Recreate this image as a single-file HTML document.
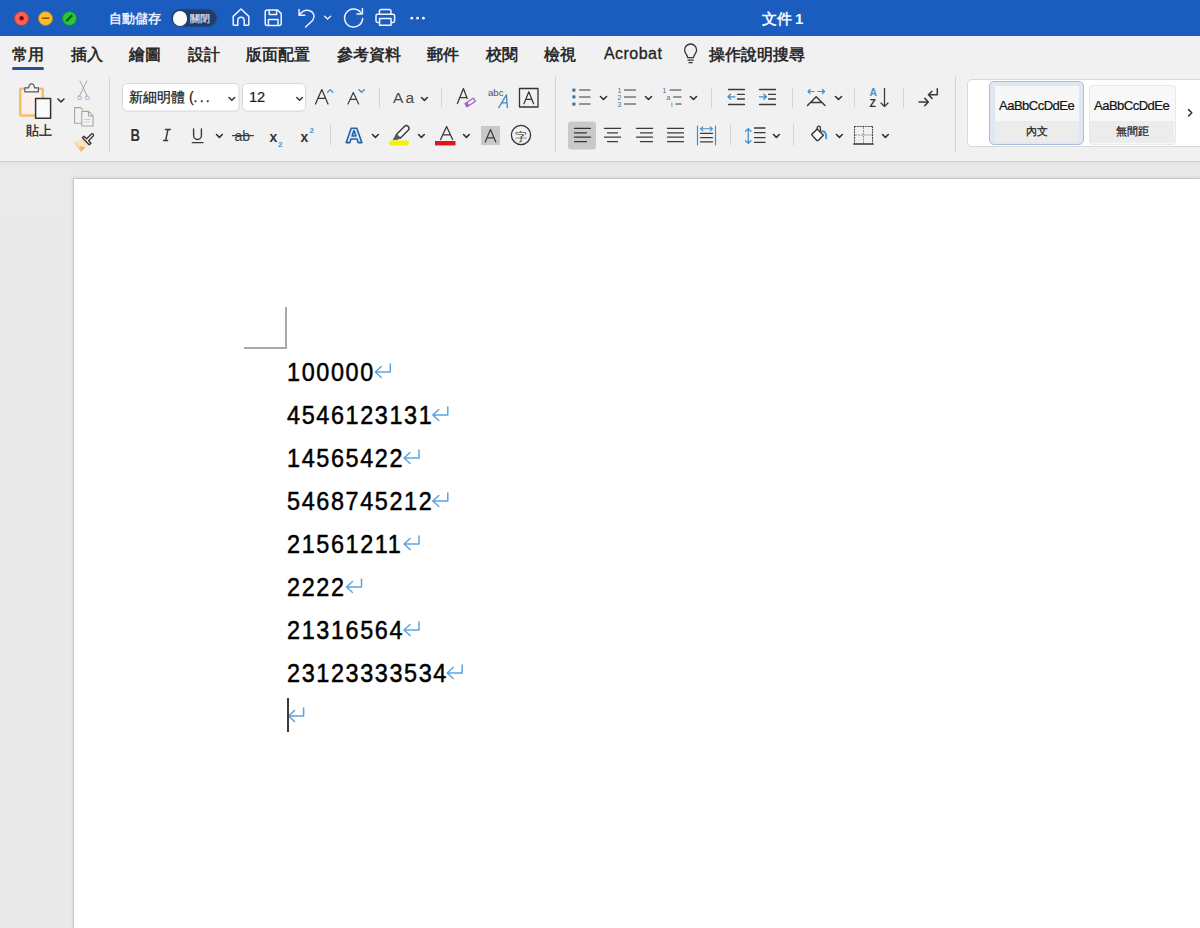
<!DOCTYPE html>
<html><head><meta charset="utf-8">
<style>
*{margin:0;padding:0;box-sizing:border-box}
html,body{width:1200px;height:928px;overflow:hidden;background:#e8e8e8;font-family:"Liberation Sans",sans-serif}
.a{position:absolute}
#title{left:0;top:0;width:1200px;height:37px;background:#1b5cbf;border-bottom:1px solid #17458f}
#tabs{left:0;top:36px;width:1200px;height:36px;background:#f1f1f1}
#ribbon{left:0;top:72px;width:1200px;height:90px;background:#f1f1f1;border-bottom:1px solid #cfcfcf}
#docbg{left:0;top:162px;width:1200px;height:766px;background:linear-gradient(#e4e4e4,#eaeaea 5px,#e9e9e9)}
#page{left:73px;top:178px;width:1127px;height:750px;background:#fff;border-left:1px solid #c9c9c9;border-top:1px solid #c9c9c9;box-shadow:-1px -1px 2px rgba(0,0,0,.08)}
.tab{position:absolute;top:45px;font-size:15.5px;font-weight:bold;color:#2b2b2b;white-space:nowrap}
.doc{position:absolute;left:287px;font-size:26px;color:#000;-webkit-text-stroke:0.5px #000;letter-spacing:1.8px;transform:scaleX(0.9);transform-origin:0 0;line-height:30px;white-space:nowrap}
.pm{color:#5aa0dc}
svg{position:absolute;overflow:visible}
</style></head><body>
<div id="title" class="a"></div>
<div id="tabs" class="a"></div>
<div id="ribbon" class="a"></div>
<div id="docbg" class="a"></div>
<div id="page" class="a"></div>

<!-- traffic lights -->
<div class="a" style="left:14px;top:11px;width:15px;height:15px;border-radius:50%;background:#fe6058;border:1px solid #b0403a"></div>
<div class="a" style="left:38px;top:11px;width:15px;height:15px;border-radius:50%;background:#fdbc2e;border:1px solid #b08420"></div>
<div class="a" style="left:62px;top:11px;width:15px;height:15px;border-radius:50%;background:#27c83f;border:1px solid #1a8a2a"></div>

<div class="a" style="left:109px;top:10px;font-size:13px;font-weight:bold;color:#e6eefc">自動儲存</div>
<div class="a" style="left:172px;top:10px;width:44px;height:16px;border-radius:8px;background:#243b68;box-shadow:0 0 1px 1px rgba(30,50,90,.5)"></div>
<div class="a" style="left:172.5px;top:11px;width:14.5px;height:14.5px;border-radius:50%;background:#fbfbf6"></div>
<div class="a" style="left:190px;top:12.5px;font-size:9.5px;font-weight:bold;color:#c9d2e2;white-space:nowrap">關閉</div>

<div class="a" style="left:762px;top:10px;font-size:15px;font-weight:bold;color:#f2f6ff;white-space:nowrap">文件<span style="margin-left:3px">1</span></div>

<!-- tabs -->
<div class="tab" style="left:12px;font-weight:bold">常用</div>
<div class="a" style="left:12px;top:67px;width:32px;height:3px;border-radius:2px;background:#2b4f93"></div>
<div class="tab" style="left:71px">插入</div>
<div class="tab" style="left:129px">繪圖</div>
<div class="tab" style="left:188px">設計</div>
<div class="tab" style="left:246px">版面配置</div>
<div class="tab" style="left:337px">參考資料</div>
<div class="tab" style="left:427px">郵件</div>
<div class="tab" style="left:486px">校閱</div>
<div class="tab" style="left:544px">檢視</div>
<div class="tab" style="left:604px;font-weight:normal;font-size:16px;color:#222;letter-spacing:0.45px;-webkit-text-stroke:0.3px #222">Acrobat</div>
<div class="tab" style="left:709px">操作說明搜尋</div>


<svg class="a" style="left:0;top:0" width="1200" height="170" viewBox="0 0 1200 170">
<g fill="none" stroke-linecap="round" stroke-linejoin="round">
<!-- paste -->
<rect x="20.2" y="88.8" width="22.6" height="26.6" rx="1" stroke="#f2bf6c" stroke-width="2.5" fill="#fbf1ea"/>
<path d="M24.8 91.8 H38.4 V87.8 H34.5 C34.2 85 32.6 83.8 31.6 83.8 C30.6 83.8 29 85 28.7 87.8 H24.8 Z" stroke="#5a5a5a" stroke-width="1.2" fill="#f3f3f3"/>
<rect x="35.6" y="98.6" width="15" height="19.6" stroke="#333" stroke-width="1.5" fill="#fafafa"/>
<path d="M58 99 L61 102 L64 99" stroke="#333" stroke-width="1.6"/>
<!-- scissors -->
<path d="M80 81 L87.2 96 M86.8 81 L79.6 96" stroke="#a7a7a7" stroke-width="1"/>
<rect x="77.8" y="96.2" width="3.4" height="3.2" rx="1" stroke="#9fb4cc" stroke-width="1"/>
<rect x="85.6" y="96.2" width="3.4" height="3.2" rx="1" stroke="#9fb4cc" stroke-width="1"/>
<!-- copy -->
<path d="M81.5 123.2 H74.6 V107.6 H80.5 L82.6 109.6" stroke="#a5a5a5" stroke-width="1.1"/>
<path d="M81.8 111.4 H88.6 L93 115.8 V126 H81.8 Z M88.4 111.4 V116 H93" stroke="#a5a5a5" stroke-width="1.1" fill="#f4f4f4"/>
<path d="M84.5 119.5 H90 M84.5 122 H90" stroke="#c0c0c0" stroke-width="0.8"/>
<!-- format painter -->
<path d="M75 142.4 L82.6 138.4 L89 144.6 L81.2 151.6 Z" stroke="none" fill="#fbe2c0"/>
<path d="M79.6 146 L85.6 147.6 L81.2 151.6 Z" stroke="none" fill="#f0b658"/>
<path d="M75 142.4 L81.2 151.6" stroke="#f3c48a" stroke-width="1.2"/>
<path d="M82.4 137.8 L84 136.2 L86.6 138.8 L91.2 134.2 A1.3 1.3 0 0 1 93.2 136 L88.6 140.8 L91 143.2 L89.2 144.8 Z" stroke="#333" stroke-width="1.3" fill="#f6f6f6"/>
<!-- separators -->
<path d="M109.5 78 V152 M379.5 88 V107 M441.5 88 V107 M330.5 124 V145 M555.5 77 V152 M711.5 88 V107 M792.5 88 V107 M854.5 88 V107 M903.5 88 V107 M730.5 124 V145 M793.5 124 V145 M955.5 77 V152" stroke="#d4d4d4" stroke-width="1"/>
</g>
</svg>


<svg class="a" style="left:0;top:0" width="1200" height="170" viewBox="0 0 1200 170">
<g fill="none" stroke-linecap="round" stroke-linejoin="round">
<!-- font & size boxes -->
<rect x="122.5" y="84" width="116.5" height="27.5" rx="4.5" fill="#e2e2e2" stroke="none"/><rect x="122.5" y="83.5" width="116.5" height="27.5" rx="4.5" fill="#fff" stroke="#dadada"/>
<rect x="242.5" y="84" width="63" height="27.5" rx="4.5" fill="#e2e2e2" stroke="none"/><rect x="242.5" y="83.5" width="63" height="27.5" rx="4.5" fill="#fff" stroke="#dadada"/>
<path d="M229 97.5 L231.8 100.3 L234.6 97.5 M296.8 97.5 L299.6 100.3 L302.4 97.5" stroke="#333" stroke-width="1.5"/>
<!-- A^ -->
<path d="M315.5 104 L321.8 89.6 L328 104 M318 98.4 H325.6" stroke="#3a3a3a" stroke-width="1.3"/>
<path d="M327.6 92.2 L330.2 89.6 L332.8 92.2" stroke="#3a8fd0" stroke-width="1.3"/>
<!-- A v -->
<path d="M348 104 L353.3 92.6 L358.6 104 M350 99.4 H356.6" stroke="#3a3a3a" stroke-width="1.2"/>
<path d="M358.8 89.6 L361.6 92.2 L364.4 89.6" stroke="#3a8fd0" stroke-width="1.3"/>
<!-- chevrons row1 -->
<path d="M421.5 97.5 L424.4 100.4 L427.3 97.5 M600.5 96.5 L603.5 99.5 L606.5 96.5 M645.5 96.5 L648.5 99.5 L651.5 96.5 M690.5 96.5 L693.5 99.5 L696.5 96.5 M835.5 96.5 L838.5 99.5 L841.5 96.5" stroke="#333" stroke-width="1.6"/>
<!-- clear formatting A + eraser -->
<path d="M457.4 103.6 L463.4 88.6 L467.2 98.4 M459.8 97.6 H466.8" stroke="#3a3a3a" stroke-width="1.3"/>
<path d="M464.9 103.7 L473.4 98.1 L475.5 101.3 L467 106.9 Z" stroke="#9b55b8" stroke-width="1.1" fill="#f6ecfa"/>
<path d="M464.9 103.7 L467 106.9 L469.4 105.3 L467.3 102.1 Z" fill="#a766c0" stroke="none"/>
<!-- abc A -->
<text x="488" y="96.4" font-size="9.6" fill="#505050" stroke="none" font-family="Liberation Sans">abc</text>
<path d="M498.8 107.6 L506.4 94.8 L507.4 107.6 M501.8 102.8 H507" stroke="#4a88bd" stroke-width="1.3"/>
<!-- boxed A -->
<rect x="519.5" y="88.5" width="18.5" height="18.5" stroke="#333" stroke-width="1.3"/>
<path d="M524 103.8 L528.8 91.8 L533.6 103.8 M525.8 99.4 H531.8" stroke="#333" stroke-width="1.2"/>

<!-- row2 font -->
<text x="0" y="0" font-size="16.8" font-weight="bold" fill="#333" stroke="none" font-family="Liberation Sans" transform="translate(130.6 140.8) scale(0.78 1)">B</text>
<path d="M165.4 129.4 H170.4 M163.6 140.6 H167.6 M168 129.4 L165.6 140.6" stroke="#3a3a3a" stroke-width="1.5"/>
<path d="M193.6 129 V135.6 A3.9 3.9 0 0 0 201.4 135.6 V129 M192.2 142.6 H203" stroke="#3a3a3a" stroke-width="1.4"/>
<path d="M216.5 134.5 L219.4 137.4 L222.3 134.5 M372.5 134.5 L375.4 137.4 L378.3 134.5 M418.5 134.5 L421.4 137.4 L424.3 134.5 M463.5 134.5 L466.4 137.4 L469.3 134.5 M773.5 134.5 L776.4 137.4 L779.3 134.5 M836.5 134.5 L839.4 137.4 L842.3 134.5 M882.5 134.5 L885.4 137.4 L888.3 134.5" stroke="#333" stroke-width="1.6"/>
<text x="234.5" y="141" font-size="14" fill="#3a3a3a" stroke="none" font-family="Liberation Sans">ab</text>
<path d="M232.5 135.6 H253.5" stroke="#3a3a3a" stroke-width="1.2"/>
<text x="269.5" y="142" font-size="14" font-weight="bold" fill="#333" stroke="none" font-family="Liberation Sans">x</text>
<text x="278" y="146.5" font-size="8" font-weight="bold" fill="#3d94d6" stroke="none" font-family="Liberation Sans">2</text>
<text x="300.5" y="142" font-size="14" font-weight="bold" fill="#333" stroke="none" font-family="Liberation Sans">x</text>
<text x="309.5" y="133" font-size="8" font-weight="bold" fill="#3d94d6" stroke="none" font-family="Liberation Sans">2</text>
<!-- text effects A -->
<path d="M346.2 142.6 L351.2 128.2 H356.8 L361.8 142.6 H358.2 L357 139 H351 L349.8 142.6 Z M352.1 136 H355.9 L354 130.6 Z" fill="#d6ecfc" stroke="#2a5f9e" stroke-width="1.6" fill-rule="evenodd"/>
<!-- highlighter -->
<path d="M396.4 134.4 L404.4 126.4 A2.6 2.6 0 0 1 408.2 130.2 L400.2 138.2 Z" stroke="#3a3a3a" stroke-width="1.4" fill="#f6f6f6"/>
<path d="M396.4 134.4 L400.2 138.2 L396.8 139.6 L393.2 139.8 L395 136.6 Z" fill="#555" stroke="#555" stroke-width="0.8"/>
<rect x="389.4" y="140.6" width="19.4" height="4.8" rx="1.5" fill="#f2f20c" stroke="none"/>
<!-- font colour -->
<path d="M440.6 139.6 L446.6 126.6 L452.6 139.6 M442.8 134.8 H450.4" stroke="#3a3a3a" stroke-width="1.3"/>
<rect x="435" y="141" width="20.5" height="4.4" fill="#e3141b" stroke="none"/>
<!-- shading A -->
<rect x="481" y="126" width="19" height="19" fill="#c8c8c8" stroke="none"/>
<path d="M485.2 142 L490.5 129.6 L495.8 142 M487.2 137.8 H493.8" stroke="#3a3a3a" stroke-width="1.2"/>
<!-- enclosed char -->
<circle cx="521" cy="135" r="9.6" stroke="#333" stroke-width="1.3"/>
<text x="514.6" y="140.6" font-size="12" fill="#333" stroke="none">字</text>

<!-- bullets -->
<g fill="#3b6d9a" stroke="none">
<rect x="572.4" y="88.6" width="3" height="3"/><rect x="572.4" y="95.4" width="3" height="3"/><rect x="572.4" y="102.6" width="3" height="3"/>
</g>
<path d="M579.5 90 H590 M579.5 97 H590 M579.5 104 H590 M624.5 90 H635.5 M624.5 97 H635.5 M624.5 104 H635.5 M670 90 H681 M673.5 97 H681 M676 104 H681" stroke="#3a3a3a" stroke-width="1.2"/>
<g font-size="6.8" fill="#466f96" stroke="none" font-family="Liberation Sans">
<text x="617.6" y="92.6">1</text><text x="617.6" y="99.6">2</text><text x="617.6" y="106.6">3</text>
<text x="662.6" y="92.6">1</text><text x="666.6" y="99.6">a</text><text x="671" y="106.6">i</text>
</g>
<!-- indent -->
<path d="M728.5 89.5 H744.5 M737.5 94.3 H744.5 M737.5 99 H744.5 M728.5 104.5 H744.5 M759.5 89.5 H775.5 M768.5 94.3 H775.5 M768.5 99 H775.5 M759.5 104.5 H775.5" stroke="#3a3a3a" stroke-width="1.3"/>
<path d="M735 96.8 H728 M730.6 94.3 L728 96.8 L730.6 99.3 M759.4 96.8 H766.4 M763.8 94.3 L766.4 96.8 L763.8 99.3" stroke="#3d8fd0" stroke-width="1.3"/>
<!-- asian layout -->
<path d="M808 91.5 H814 M810 89.5 L808 91.5 L810 93.5 M818 91.5 H824.5 M822.5 89.5 L824.5 91.5 L822.5 93.5" stroke="#3d8fd0" stroke-width="1.2"/>
<path d="M807.5 105.5 L816.2 96.8 L825 105.5 M811.5 102.6 H820.8" stroke="#3a3a3a" stroke-width="1.5"/>
<!-- sort -->
<text x="869.4" y="95.9" font-size="10.4" font-weight="bold" fill="#4a90c8" stroke="none" font-family="Liberation Sans">A</text>
<text x="869.6" y="106.9" font-size="10.4" font-weight="bold" fill="#333" stroke="none" font-family="Liberation Sans">Z</text>
<path d="M884.5 88.5 V106.5 M881 103 L884.5 106.5 L888 103" stroke="#3a3a3a" stroke-width="1.3"/>
<!-- show marks -->
<path d="M919 102 H928.4 M924.8 98.4 L928.4 102 L924.8 105.6 M937.3 88.8 V94.8 H928.4 M932 91.2 L928.4 94.8 L932 98.4" stroke="#3a3a3a" stroke-width="1.5"/>

<!-- align -->
<rect x="568" y="121.5" width="28" height="28" rx="3" fill="#c9c9c9" stroke="none"/>
<path d="M574.5 128.4 H590.5 M574.5 132.8 H586.5 M574.5 137.2 H590.5 M574.5 141.6 H586.5" stroke="#333" stroke-width="1.3"/>
<path d="M604.5 128.4 H620.5 M607.5 132.8 H617.5 M604.5 137.2 H620.5 M607.5 141.6 H617.5" stroke="#3a3a3a" stroke-width="1.3"/>
<path d="M636.5 128.4 H652.5 M640.5 132.8 H652.5 M636.5 137.2 H652.5 M640.5 141.6 H652.5" stroke="#3a3a3a" stroke-width="1.3"/>
<path d="M667.5 128.4 H683.5 M667.5 132.8 H683.5 M667.5 137.2 H683.5 M667.5 141.6 H683.5" stroke="#3a3a3a" stroke-width="1.3"/>
<path d="M697.5 126 V145 M715.5 126 V145" stroke="#3d8fd0" stroke-width="1.2"/>
<path d="M700.5 128.8 H712.5 M702.8 126.8 L700.5 128.8 L702.8 130.8 M710.2 126.8 L712.5 128.8 L710.2 130.8" stroke="#3d8fd0" stroke-width="1.1"/>
<path d="M700.5 133.4 H712.5 M700.5 137.6 H712.5 M700.5 141.8 H712.5" stroke="#3a3a3a" stroke-width="1.3"/>
<!-- line spacing -->
<path d="M748.3 128.6 V143.4 M745.6 131.2 L748.3 128.6 L751 131.2 M745.6 140.8 L748.3 143.4 L751 140.8" stroke="#3d8fd0" stroke-width="1.3"/>
<path d="M754.5 128 H765 M754.5 132.7 H765 M754.5 137.6 H765 M754.5 142.4 H765" stroke="#3a3a3a" stroke-width="1.3"/>
<!-- shading bucket -->
<path d="M811.6 134.6 L817.2 129 L823.4 135.2 L818.4 140.2 A1.3 1.3 0 0 1 816.6 140.2 Z" stroke="#333" stroke-width="1.4" fill="#fafafa"/>
<path d="M817.2 129 L817.2 127.8 A1.6 1.6 0 0 1 820.4 127.8 L820.4 132.4" stroke="#333" stroke-width="1.3"/>
<path d="M821.4 131.4 C824.6 130.6 826.6 133 826.2 138.4" stroke="#3d8fd0" stroke-width="1.8"/>
<!-- borders -->
<path d="M854.5 126.5 H872.5 M854.5 126.5 V143 M872.5 126.5 V143" stroke="#444" stroke-width="1.1" stroke-dasharray="1.1 1.6"/><path d="M863.5 127.5 V143 M855.5 135 H871.5" stroke="#8a8a8a" stroke-width="1" stroke-dasharray="1.1 1.8"/>
<path d="M854 144 H873" stroke="#333" stroke-width="1.7"/>
</g>
</svg>


<svg class="a" style="left:0;top:0" width="1200" height="40" viewBox="0 0 1200 40">
<g fill="none" stroke="#eef3fc" stroke-width="1.5" stroke-linecap="round" stroke-linejoin="round">
<path d="M233.2 16.4 L241 9 L248.8 16.4 V24.6 A1 1 0 0 1 247.8 25.2 H244.2 V20.4 A3.2 3.2 0 0 0 237.8 20.4 V25.2 H234.2 A1 1 0 0 1 233.2 24.6 Z"/>
<path d="M265.2 12 A2 2 0 0 1 267.2 10 H277.6 L281.2 13.6 V23.6 A2 2 0 0 1 279.2 25.6 H267.2 A2 2 0 0 1 265.2 23.6 Z M269.2 10.2 V14.6 H276.6 V10.2 M268.4 25.4 V19.4 H278 V25.4"/>
<path d="M299 9.4 V15.2 H304.8 M299.4 14.8 C302 11.2 305.6 9.6 309 10.4 C313.6 11.6 315.6 16 312.8 20.2 L305.6 27"/>
<path d="M324.6 16.2 L327.6 19 L330.6 16.2" stroke-width="1.4"/>
<path d="M360.6 12.4 A9 9 0 1 0 362.6 18.4 M362.4 8.6 V14 H357"/>
<path d="M379.4 14.2 V11.4 A2 2 0 0 1 381.4 9.4 H389 A2 2 0 0 1 391 11.4 V14.2 M379 22.4 H377.6 A1.6 1.6 0 0 1 376 20.8 V15.8 A1.6 1.6 0 0 1 377.6 14.2 H393 A1.6 1.6 0 0 1 394.6 15.8 V20.8 A1.6 1.6 0 0 1 393 22.4 H391.6 M379.6 18.4 H391 V25.2 H379.6 Z"/>
</g>
<g fill="#eef3fc"><circle cx="411.8" cy="18.2" r="1.4"/><circle cx="417.6" cy="18.2" r="1.4"/><circle cx="423.4" cy="18.2" r="1.4"/></g>
<!-- traffic light glyphs -->
<circle cx="21.6" cy="18.2" r="2.2" fill="#7e0b0a"/>
<path d="M41.8 18.2 H49.4" stroke="#8b5a00" stroke-width="1.6"/>
<path d="M66.2 21.2 L72.2 15.2" stroke="#0a5c12" stroke-width="2.2"/>
</svg>


<!-- labels -->
<div class="a" style="left:26px;top:123px;font-size:12.5px;color:#222;-webkit-text-stroke:0.3px #222">貼上</div>
<div class="a" style="left:129px;top:89px;font-size:14px;color:#222;white-space:nowrap;-webkit-text-stroke:0.25px #222">新細明體 (<span style="letter-spacing:2.2px">...</span></div>
<div class="a" style="left:249px;top:88.5px;font-size:14.6px;color:#1a1a1a;-webkit-text-stroke:0.2px #1a1a1a">12</div>
<div class="a" style="left:393px;top:89px;font-size:15.5px;color:#484848;letter-spacing:2.2px">Aa</div>

<!-- lightbulb -->
<svg class="a" style="left:680px;top:40px" width="24" height="28" viewBox="680 40 24 28">
<g fill="none" stroke="#333" stroke-width="1.3" stroke-linecap="round" stroke-linejoin="round">
<path d="M687.6 57.6 C687.6 54.6 684.6 53.4 684.6 50 A6 6 0 0 1 696.6 50 C696.6 53.4 693.6 54.6 693.6 57.6 Z M688 60.2 H693.2 M689 62.6 H692.2"/>
</g></svg>

<!-- gallery -->
<div class="a" style="left:967px;top:79px;width:240px;height:68px;background:#fff;border:1px solid #d8d8d8;border-radius:5px"></div>
<div class="a" style="left:989px;top:81px;width:95px;height:64px;background:#dfe7f3;border:1.5px solid #a9bedd;border-radius:5px"></div>
<div class="a" style="left:995px;top:86px;width:84px;height:56px;background:#f7f7f7"></div>
<div class="a" style="left:995px;top:121px;width:84px;height:21px;background:#ececec"></div>
<div class="a" style="left:1089.5px;top:85.5px;width:85px;height:58px;background:#f8f8f8;border-radius:3px;box-shadow:0 0 0 1px #e8e8e8"></div>
<div class="a" style="left:1090px;top:121px;width:84px;height:22px;background:#ececec"></div>
<div class="a" style="left:999px;top:98px;font-size:13px;color:#111;white-space:nowrap;letter-spacing:-0.5px;-webkit-text-stroke:0.2px #111">AaBbCcDdEe</div>
<div class="a" style="left:1094px;top:98px;font-size:13px;color:#111;white-space:nowrap;letter-spacing:-0.5px;-webkit-text-stroke:0.2px #111">AaBbCcDdEe</div>
<div class="a" style="left:1026px;top:124px;font-size:11px;color:#222;-webkit-text-stroke:0.25px #222">內文</div>
<div class="a" style="left:1116px;top:124px;font-size:11px;color:#222;-webkit-text-stroke:0.25px #222">無間距</div>
<svg class="a" style="left:1180px;top:100px" width="20" height="25" viewBox="1180 100 20 25"><path d="M1188.6 109.6 L1191.8 112.8 L1188.6 116" fill="none" stroke="#333" stroke-width="1.5" stroke-linecap="round" stroke-linejoin="round"/></svg>

<!-- document -->
<div class="a" style="left:244px;top:347px;width:43px;height:2px;background:#a9a9a9"></div>
<div class="a" style="left:285px;top:307px;width:2px;height:42px;background:#a9a9a9"></div>
<div class="doc" style="top:357px">100000</div>
<div class="doc" style="top:400px">4546123131</div>
<div class="doc" style="top:443px">14565422</div>
<div class="doc" style="top:486px">5468745212</div>
<div class="doc" style="top:529px">21561211</div>
<div class="doc" style="top:572px">2222</div>
<div class="doc" style="top:615px">21316564</div>
<div class="doc" style="top:658px">23123333534</div>
<svg class="a" style="left:0;top:0" width="1200" height="928"><path d="M390.3 364.0 V372.0 H375.3 M381.3 366.5 L375.3 372.0 L381.3 377.5 M447.8 407.0 V415.0 H432.8 M438.8 409.5 L432.8 415.0 L438.8 420.5 M419.0 450.0 V458.0 H404.0 M410.0 452.5 L404.0 458.0 L410.0 463.5 M447.8 493.0 V501.0 H432.8 M438.8 495.5 L432.8 501.0 L438.8 506.5 M419.0 536.0 V544.0 H404.0 M410.0 538.5 L404.0 544.0 L410.0 549.5 M361.5 579.0 V587.0 H346.5 M352.5 581.5 L346.5 587.0 L352.5 592.5 M419.0 622.0 V630.0 H404.0 M410.0 624.5 L404.0 630.0 L410.0 635.5 M462.2 665.0 V673.0 H447.2 M453.2 667.5 L447.2 673.0 L453.2 678.5 M303.6 708.0 V716.0 H288.6 M294.6 710.5 L288.6 716.0 L294.6 721.5" fill="none" stroke="#5fa3dc" stroke-width="1.5" stroke-linecap="round" stroke-linejoin="round"/></svg>
<div class="a" style="left:287.4px;top:697.5px;width:1.3px;height:34px;background:#3a3a3a"></div>
</body></html>
